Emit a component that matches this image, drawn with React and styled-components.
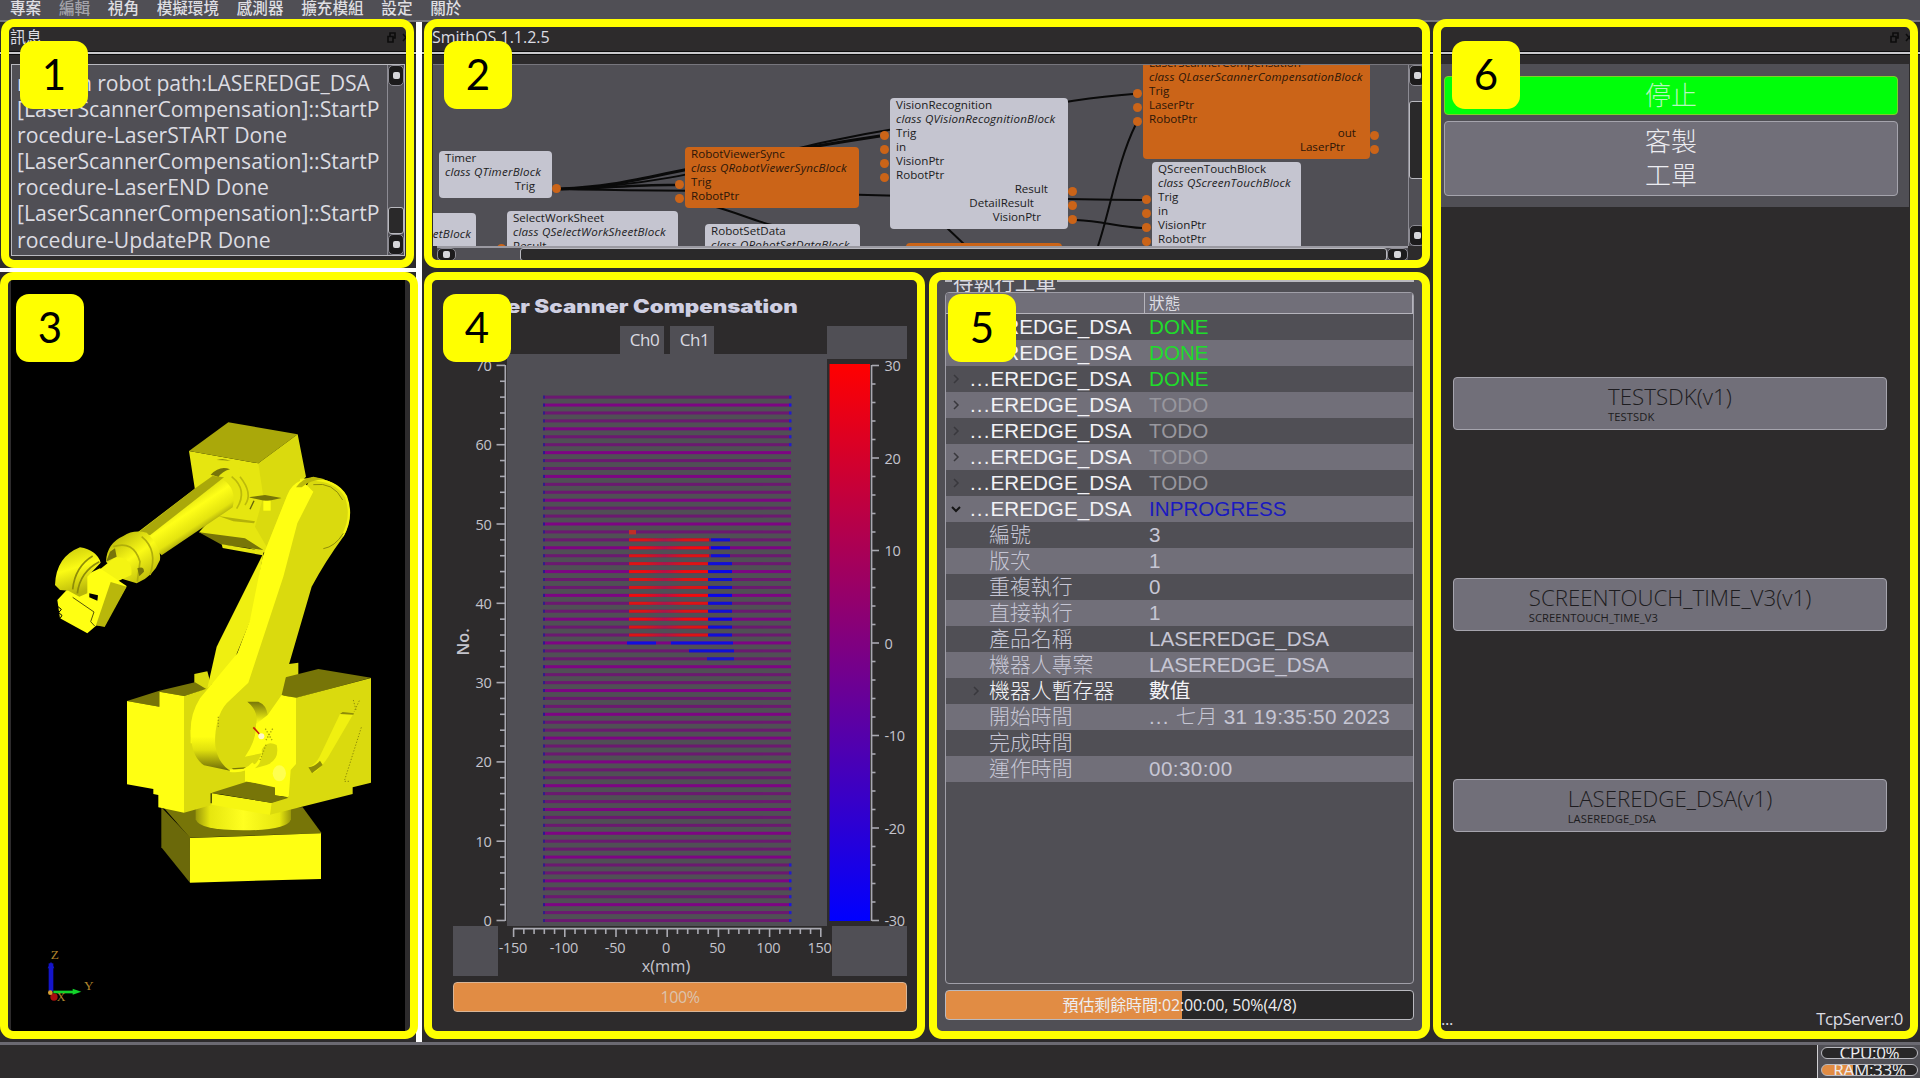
import React from "react";
import styled, { createGlobalStyle, css } from "styled-components";

const UI = `"Open Sans", "Noto Sans CJK TC", sans-serif`;
const ARIAL = `"Liberation Sans", "Noto Sans CJK TC", sans-serif`;

const C = {
  dark: "#2d2b2c",
  mid: "#504f55",
  light: "#716f79",
  line: "#b9b9bf",
  text: "#dcdce2",
  orange: "#cb6418",
  bar: "#e18c44",
  node: "#c5c5d0",
};

const Global = createGlobalStyle`
  * { box-sizing: border-box; }
  html, body { margin: 0; padding: 0; background: ${C.dark}; overflow: hidden; }
`;

const Screen = styled.div`
  width: 1920px;
  height: 1078px;
  display: flex;
  flex-direction: column;
  overflow: hidden;
  background: ${C.dark};
  color: ${C.text};
  font-family: ${UI};
  white-space: nowrap;
`;

/* ---------- menu ---------- */
const MenuBar = styled.nav`
  flex: none;
  height: 22px;
  padding: 0 0 3px 10px;
  display: flex;
  align-items: center;
  gap: 17.7px;
  background: ${C.mid};
  border-bottom: 2px solid #77767d;
`;
const MenuItem = styled.span`
  font-size: 15.6px;
  line-height: 17px;
  font-weight: 500;
  color: ${(p) => (p.$dim ? "#a3a3aa" : "#dedee2")};
`;

/* ---------- docks ---------- */
const Workspace = styled.main`
  flex: none;
  height: 1020px;
  display: flex;
`;
const Column = styled.div`
  flex: none;
  width: ${(p) => p.$w}px;
  display: flex;
  flex-direction: column;
`;
const Row = styled.div`
  display: flex;
  flex: 1;
`;
const Splitter = styled.div`
  flex: none;
  background: #fff;
  ${(p) => (p.$vertical ? css`width: 6px;` : css`height: 4px;`)}
`;
const Dock = styled.section`
  position: relative;
  flex: none;
  display: flex;
  flex-direction: column;
  width: ${(p) => (p.$w ? p.$w + "px" : "auto")};
  height: ${(p) => p.$h}px;
`;
const TitleBar = styled.header`
  flex: none;
  height: 32px;
  margin-bottom: 10px;
  padding: ${(p) => p.$pad || "0 6px 0 10px"};
  display: flex;
  align-items: center;
  justify-content: space-between;
  border-bottom: 2px solid #c9c9cc;
  box-shadow: inset 0 -1px 0 #0c0c0c, 0 1px 0 #0c0c0c;
  font-size: 16px;
  line-height: 20px;
`;
const DockButtons = styled.span`
  display: flex;
  gap: 6px;
  margin-left: auto;
`;
const Highlight = styled.div`
  position: absolute;
  z-index: 3;
  left: ${(p) => p.$x}px;
  top: ${(p) => p.$y}px;
  width: ${(p) => p.$w}px;
  height: ${(p) => p.$h}px;
  border: 8px solid #ff0;
  border-radius: 13px;
`;
const Badge = styled.div`
  position: absolute;
  z-index: 4;
  left: ${(p) => p.$x}px;
  top: ${(p) => p.$y}px;
  width: 68px;
  height: 68px;
  border-radius: 13px;
  background: #ff0;
  color: #000;
  text-align: center;
  font: 42px/67px Lato, sans-serif;
`;

/* ---------- message log ---------- */
const LogBox = styled.div`
  flex: none;
  height: 192px;
  margin: 0 11px 0 11px;
  display: flex;
  background: ${C.mid};
  border: 1px solid ${C.line};
`;
const LogText = styled.div`
  flex: 1;
  padding: 5px 0 0 5px;
  font-size: 21.2px;
  line-height: 26.1px;
  overflow: hidden;
`;
const LogLine = styled.div`
  letter-spacing: ${(p) => p.$ls}px;
`;
const VBar = styled.div`
  flex: none;
  width: 17px;
  display: flex;
  flex-direction: column;
  border-left: 1px solid #8c8b93;
`;
const ScrollButton = styled.i`
  flex: none;
  width: ${(p) => p.$w || 16}px;
  height: ${(p) => p.$h || 21}px;
  display: flex;
  align-items: center;
  justify-content: center;
  background: #1c1b1c;
  border: 1px solid #8c8b93;
  border-radius: 5px;
  &::after {
    content: "";
    width: 7px;
    height: 7px;
    border-radius: 2px;
    background: #d6d6da;
  }
`;
const Track = styled.i`
  flex: ${(p) => p.$grow || 1};
`;
const Thumb = styled.i`
  flex: none;
  ${(p) => (p.$h ? css`height: ${p.$h}px;` : css`flex: 1;`)}
  background: #2a292a;
  border: 1px solid ${C.line};
  border-radius: 3px;
`;

/* ---------- block canvas ---------- */
const GraphArea = styled.div`
  flex: none;
  height: 182px;
  margin: 0 6px 0 11px;
  display: flex;
  background: ${C.mid};
  border-top: 1px solid #77767d;
`;
const Canvas = styled.div`
  position: relative;
  flex: none;
  width: 975px;
  height: 181px;
  overflow: hidden;
`;
const Wires = styled.svg`
  position: absolute;
  inset: 0;
`;
const Node = styled.div`
  position: absolute;
  left: ${(p) => p.$x}px;
  top: ${(p) => p.$y}px;
  width: ${(p) => p.$w}px;
  height: ${(p) => p.$h}px;
  padding: 0 6px;
  border-radius: 4px;
  background: ${(p) => (p.$hot ? C.orange : C.node)};
  color: ${(p) => (p.$hot ? "#2c1608" : "#1c1c22")};
  font-size: 11.6px;
  line-height: 14px;
`;
const NodeName = styled.div`
  font-weight: 500;
`;
const NodeClass = styled.div`
  font-style: italic;
  letter-spacing: 0.2px;
  text-align: ${(p) => (p.$end ? "right" : "left")};
  padding-right: ${(p) => (p.$end ? "6px" : 0)};
`;
const PortIn = styled.div`
  position: relative;
  &::before {
    content: "";
    position: absolute;
    left: -16px;
    top: 5px;
    width: 9px;
    height: 9px;
    border-radius: 50%;
    background: ${C.orange};
  }
`;
const PortOut = styled.div`
  position: relative;
  text-align: right;
  padding-right: ${(p) => p.$pr}px;
  &::after {
    content: "";
    position: absolute;
    right: -15px;
    top: 5px;
    width: 9px;
    height: 9px;
    border-radius: 50%;
    background: ${C.orange};
  }
`;
const HBar = styled.div`
  flex: none;
  height: 15px;
  margin: 0 23px 0 15px;
  display: flex;
  border-top: 2px solid #9a99a1;
  background: ${C.mid};
`;

/* ---------- 3D view ---------- */
const Viewport = styled.div`
  flex: none;
  height: 751px;
  margin: 8px 11px 0;
  background: #000;
`;

/* ---------- scanner ---------- */
const Scanner = styled.div`
  display: flex;
  flex-direction: column;
  padding: 21px 20px 0 31px;
`;
const ScannerTitle = styled.h1`
  margin: 0;
  height: 33px;
  padding-right: 109px;
  text-align: right;
  font: 900 18.4px/26px Inter, sans-serif;
  color: #cfcfe2;
  span {
    display: inline-block;
    transform: scaleX(1.215);
    transform-origin: right;
  }
`;
const Tabs = styled.div`
  display: flex;
  height: 28px;
  padding-left: 167px;
  gap: 6px;
`;
const Tab = styled.div`
  width: 44px;
  background: ${C.mid};
  text-align: center;
  padding-left: 5px;
  font-size: 17px;
  line-height: 28px;
  letter-spacing: -0.5px;
`;
const Corner = styled.div`
  width: 80px;
  margin-left: auto;
  background: ${C.mid};
`;
const Progress = styled.div`
  position: relative;
  flex: none;
  height: ${(p) => p.$h}px;
  margin: ${(p) => p.$m || 0};
  border: 1px solid ${(p) => (p.$full ? "#d9b596" : C.line)};
  border-radius: ${(p) => p.$r || 4}px;
  background: linear-gradient(to right, ${C.bar} ${(p) => p.$value}%, #282728 ${(p) => p.$value}%);
  color: ${(p) => (p.$full ? "#dcc3ad" : "#ededf0")};
  text-align: center;
  font-size: ${(p) => p.$fs}px;
  line-height: ${(p) => p.$h - 2}px;
  letter-spacing: ${(p) => p.$ls || 0}px;
  overflow: hidden;
`;

/* ---------- work orders ---------- */
const Orders = styled.div`
  height: 751px;
  margin: 8px 9px 0 10px;
  padding: 0 8px;
  background: ${C.mid};
  overflow: hidden;
`;
const GroupTitle = styled.div`
  height: 12px;
  display: flex;
  justify-content: space-between;
  overflow: hidden;
  font-size: 20.6px;
  line-height: 12px;
  &::before {
    content: "";
    width: 7px;
    height: 2px;
    background: #b9b9bf;
  }
  &::after {
    content: "";
    width: 357px;
    height: 2px;
    background: #b9b9bf;
  }
`;
const GroupLabel = styled.span`
  transform: translateY(-3px);
`;
const Table = styled.div`
  height: 692px;
  border: 1px solid #a09fa8;
  border-radius: 4px;
  overflow: hidden;
`;
const HeadRow = styled.div`
  display: flex;
  height: 21px;
  background: ${C.light};
  border: solid #b5b4bc;
  border-width: 0 1px 1px 0;
  font-size: 15.7px;
  line-height: 20px;
`;
const HeadCell = styled.div`
  width: ${(p) => (p.$first ? "199px" : "auto")};
  padding-left: 4px;
  border-right: ${(p) => (p.$first ? "1px solid #b5b4bc" : "0")};
`;
const OrderRow = styled.div`
  display: flex;
  align-items: center;
  height: 26px;
  background: ${(p) => (p.$alt ? C.light : C.mid)};
  font-family: ${ARIAL};
  font-size: 20.65px;
  line-height: 26px;
  color: ${(p) => (p.$strong ? "#f2f2f6" : "#c6c6d4")};
`;
const Caret = styled.span`
  flex: none;
  width: ${(p) => (p.$child ? "43px" : "24px")};
  display: flex;
  padding-left: ${(p) => (p.$child ? "25px" : "5px")};
`;
const NameCell = styled.span`
  flex: none;
  width: ${(p) => (p.$child ? "160px" : "179px")};
  font-weight: ${(p) => (p.$thin ? 300 : 400)};
  font-size: ${(p) => (p.$child ? "20.9px" : "inherit")};
`;
const ValueCell = styled.span`
  color: ${(p) => p.$c || "inherit"};
  letter-spacing: ${(p) => p.$ls || 0}px;
`;
const ThinText = styled.span`
  font-weight: 300;
`;
const Dots = styled.span`
  letter-spacing: 1.1px;
`;

/* ---------- task panel ---------- */
const TaskTop = styled.div`
  flex: none;
  height: 143px;
  margin: 0 11px 0 10px;
  padding: 12px 11px 0 3px;
  background: ${C.mid};
`;
const BigButton = styled.button`
  display: block;
  width: 100%;
  height: ${(p) => p.$h}px;
  margin: 0 0 6px;
  padding: 0 0 3px;
  border: 1px solid ${(p) => (p.$go ? "#7fd02a" : "#a5a4ad")};
  border-radius: 4px;
  background: ${(p) => (p.$go ? "#00ff0a" : C.light)};
  color: ${(p) => (p.$go ? "#b4f8bc" : "#ececf1")};
  font: 300 26px/34.5px "Noto Sans CJK TC", sans-serif;
`;
const TaskList = styled.div`
  display: flex;
  flex-direction: column;
  gap: 148px;
  padding: 170px 33px 0 22px;
`;
const TaskButton = styled.button`
  height: 53px;
  padding: 4px 0 0;
  display: flex;
  justify-content: center;
  border: 1px solid #a5a4ad;
  border-radius: 4px;
  background: ${C.light};
  color: #1d1c20;
  font-family: ${UI};
  text-align: left;
`;
const TaskName = styled.div`
  font-size: 22.3px;
  line-height: 29px;
  font-weight: 300;
`;
const TaskCode = styled.div`
  font-size: 11.2px;
  line-height: 11px;
  letter-spacing: 0.08px;
`;
const TaskFoot = styled.div`
  margin-top: auto;
  display: flex;
  justify-content: space-between;
  padding: 0 17px 11px 10px;
  font-size: 16.8px;
  line-height: 24px;
  letter-spacing: -0.45px;
`;

/* ---------- status bar ---------- */
const StatusBar = styled.footer`
  flex: 1;
  display: flex;
  justify-content: flex-end;
  border-top: 3px solid #6b6a72;
`;
const Meters = styled.div`
  width: 103px;
  padding: 2px 2px 0 3px;
  display: flex;
  flex-direction: column;
  gap: 5px;
  background: ${C.mid};
  border-left: 1px solid #d0d0d4;
`;

const Restore = () => (
  <svg width="9" height="11" viewBox="0 0 9 11" fill="none" stroke="#0c0c0c" strokeWidth="1.6">
    <path d="M3 4V1h5v5H6M1 4.5h5V10H1z" />
  </svg>
);
const Close = () => (
  <svg width="8" height="11" viewBox="0 0 8 11" fill="none" stroke="#0c0c0c" strokeWidth="1.6">
    <path d="M1 2l6 7M7 2L1 9" />
  </svg>
);
const Chevron = ({ open }) => (
  <svg width="10" height="10" viewBox="0 0 10 10" fill="none" stroke={open ? "#151515" : "#39383d"} strokeWidth={open ? 2 : 1.5}>
    <path d={open ? "M1 3l4 4 4-4" : "M3 1l4 4-4 4"} />
  </svg>
);

/* Robot drawn on two sheets at three times the screen size. */
function Robot() {
  const dark = "#777508";
  const side = "#dada0e";
  const hi = "#ffff12";
  return (
    <svg width="394" height="751" viewBox="11 280 394 751">
      <defs>
        <linearGradient id="cyl" x1="587" x2="873" y1="0" y2="0" gradientUnits="userSpaceOnUse">
          <stop offset="0" stopColor="#9a980a" />
          <stop offset="0.15" stopColor="#e6e60f" />
          <stop offset="0.5" stopColor="#ffff20" />
          <stop offset="0.88" stopColor="#e6e60f" />
          <stop offset="1" stopColor="#9a980a" />
        </linearGradient>
        <linearGradient id="arm" x1="530" y1="360" x2="600" y2="466" gradientUnits="userSpaceOnUse">
          <stop offset="0" stopColor="#d0d00d" />
          <stop offset="0.4" stopColor="#ffff18" />
          <stop offset="0.75" stopColor="#e4e40f" />
          <stop offset="1" stopColor="#8f8d08" />
        </linearGradient>
        <linearGradient id="ring" x1="350" y1="470" x2="450" y2="610" gradientUnits="userSpaceOnUse">
          <stop offset="0" stopColor="#bcba0a" />
          <stop offset="0.45" stopColor="#fbfb16" />
          <stop offset="1" stopColor="#b4b20a" />
        </linearGradient>
        <linearGradient id="hand" x1="190" y1="510" x2="230" y2="640" gradientUnits="userSpaceOnUse">
          <stop offset="0" stopColor="#cfcf0c" />
          <stop offset="0.45" stopColor="#fbfb14" />
          <stop offset="1" stopColor="#b8b60a" />
        </linearGradient>
        <linearGradient id="curve" x1="0" y1="1070" x2="0" y2="1170" gradientUnits="userSpaceOnUse">
          <stop offset="0" stopColor={hi} />
          <stop offset="0.4" stopColor="#e0e00e" />
          <stop offset="1" stopColor="#6e6c06" />
        </linearGradient>
        <linearGradient id="slot" x1="0" y1="155" x2="0" y2="215" gradientUnits="userSpaceOnUse">
          <stop offset="0" stopColor="#777508" />
          <stop offset="1" stopColor="#f4f412" />
        </linearGradient>
      </defs>
      <g transform="translate(0 650) scale(0.33333)">
        <path fill="#6b690a" d="M484 472L570 562V698L484 592z" />
        <path fill={dark} d="M490 472H908L965 550L570 563z" />
        <path fill={hi} d="M570 564L963 550V687L570 698z" />
        <path fill="url(#cyl)" d="M587 460V508Q597 541 730 541T873 508V460z" />
        <path fill={side} d="M583 72L622 64L640 130L583 112zM850 44L895 38V75L845 90z" />
        <path fill={dark} d="M381 153L478 122L585 97L620 118L552 138L478 125V170z" />
        <path fill={hi} d="M381 153L478 170V125L552 138V488L475 472V435L460 432V417L381 403z" />
        <path fill={side} d="M552 138L620 116L888 143V440L632 430V466L552 488z" />
        <path fill={dark} d="M845 85L955 57L1113 83L888 144L840 135z" />
        <path fill={side} d="M888 143L1113 84V398L1058 412V432L810 494L812 458L866 440L888 340z" />
        <path fill={hi} d="M840 135L888 143V342L872 360L866 442L825 436V406L735 394V360L800 320z" />
        <path fill="#f6f612" d="M635 430L815 458L810 494L780 490L635 464z" />
        <path fill={dark} d="M635 428L740 395L825 408V435L866 443L815 459z" />
        <path fill="#f0f010" d="M1020 192L1060 192L985 320Q955 366 936 370L925 352Q945 346 958 322z" />
        <path fill="#8e8c08" d="M1020 192L1028 186L1062 190L1060 194zM925 352Q945 350 960 332L968 345L936 370z" />
        <path d="M1084 232L1034 390M1060 150L1068 180M1078 152L1062 186M1034 394H1052" stroke="#8e8c08" strokeWidth="3" strokeDasharray="4 5" fill="none" />
      </g>
      <g transform="translate(0 380) scale(0.33333)">
        <path fill="#e6e610" d="M567 213L775 250L880 330L800 520L597 457L630 420L585 330z" />
        <path fill="#aaa80a" d="M685 127L893 163L775 250L567 213z" />
        <path fill={side} d="M775 250L893 163L918 290L862 345L800 500L765 440L790 350z" />
        <path fill={dark} d="M597 457L735 475L790 510L665 494zM745 352L795 345L845 354L800 364z" />
        <path fill="#b4b20a" d="M655 408L765 424L762 430L700 424z" />
        <path fill="#e6e610" d="M665 493L792 513L788 526L668 504z" />
        <path fill={hi} d="M790 362h22v30h-22z" />
        <path d="M762 362L750 388" stroke="#66640a" strokeWidth="4" />
        <path fill="#e6e610" d="M630 285Q680 235 735 275Q785 340 715 388z" />
        <path fill="#77750a" d="M632 284Q660 255 690 268Q665 275 655 292zM650 240q20-6 42 2l-20-1z" />
        <path fill="none" stroke="#bcba0b" strokeWidth="5" d="M695 290Q745 330 710 386M720 290Q760 340 735 375" />
        <path fill="url(#arm)" d="M586 325L640 286Q715 310 698 382L485 526L415 455z" />
        <path fill="#aaa80a" d="M586 325L638 288L672 292L450 466L412 460z" />
        <path fill="url(#ring)" d="M318 545Q320 490 370 468Q400 448 440 458Q485 500 480 540Q460 590 410 610L370 598z" />
        <path fill="none" stroke="#b0ae0a" strokeWidth="5" d="M425 470Q475 510 450 585M340 500Q400 480 420 545L412 605" />
        <path fill="#f4f412" d="M285 580L345 532Q400 530 394 585L340 610z" />
        <path fill="#77750a" d="M318 545L330 515L345 505L350 530zM412 565q20-8 20 10l-14 14z" />
        <path fill={hi} d="M225 600L300 565L380 618L312 738L290 736L262 760L180 715L172 660L205 625z" />
        <path fill="#b9b70b" d="M332 606L380 620L314 741L288 736z" />
        <path fill="#000" d="M268 640L294 646L292 662L268 652z" />
        <path fill="url(#hand)" d="M165 615Q168 530 240 502Q290 510 302 548L262 590V640L238 650L205 632L180 630z" />
        <path fill="none" stroke="#8e8c08" strokeWidth="5" d="M278 528Q225 560 218 628M298 545Q240 575 232 640" />
        <path d="M218 652L282 696L272 725L284 738" fill="none" stroke="#55530a" strokeWidth="3" />
        <path d="M174 680l10 8l-8 10l10 8l-6 10" fill="none" stroke="#000" strokeWidth="3" />

        <path fill="#efef11" d="M790 520L650 800L622 925L690 870L760 700z" />
        <path fill={side} d="M935 292Q1010 298 1040 350Q1062 410 1030 470Q975 545 935 620L865 860L825 1030Q805 1140 735 1166L660 1150L640 1000L745 900L870 400z" />
        <path fill="none" stroke="#f4f412" strokeWidth="7" d="M900 300Q1005 290 1038 350Q1060 410 1028 468" />
        <path fill="none" stroke="#8e8c08" strokeWidth="3" d="M940 314Q1000 305 1028 360M1030 460Q1005 500 970 506" />
        <path fill={hi} d="M862 345L788 530L750 720L712 820L600 955Q572 1000 572 1050V1090L645 1090Q645 1010 680 970L745 908L850 590L892 430L940 335L905 300Q872 315 862 345z" />
        <path fill="#bcba0a" d="M888 322Q905 295 940 290L975 298Q930 300 905 322z" />
        <path fill="url(#curve)" d="M572 1050Q572 1130 612 1156L690 1172Q640 1140 645 1060z" />
        <path d="M690 1172Q735 1178 760 1150" stroke={hi} strokeWidth="8" fill="none" />
      </g>
      <g transform="translate(0 650) scale(0.33333)">
        <path fill="url(#slot)" d="M742 155L775 155Q800 165 803 195L800 225L768 225Q778 185 742 155z" />
        <path fill={hi} d="M768 222L803 195L845 135L880 150V300L860 420L735 392V365Q770 350 785 310L735 320Q770 270 768 222z" />
        <path fill={side} d="M785 300Q800 270 830 285Q840 330 800 345L765 355Q790 335 785 300z" />
        <ellipse cx="838" cy="370" rx="20" ry="24" fill="#ffff50" />
        <path d="M760 232L778 252" stroke="#c81e0a" strokeWidth="5" />
        <circle cx="784" cy="259" r="9" fill="#fff6c8" />
        <path d="M796 236l22 38M818 236l-22 38M655 200v34M780 330l20-50" stroke="#a8a60a" strokeWidth="4" strokeDasharray="4 5" />
        <path fill={dark} d="M695 355L738 352L730 356L700 358z" />
        <path d="M153 1024V940" stroke="#1414c8" strokeWidth="14" />
        <path fill="#1414c8" d="M143 955L153 935L163 955z" />
        <path d="M160 1026H222" stroke="#12d22a" strokeWidth="8" />
        <path fill="#12d22a" d="M218 1016L244 1025L218 1034z" />
        <circle cx="162" cy="1041" r="11" fill="#a80d0d" />
        <circle cx="151" cy="1028" r="7" fill="#d8a030" />
        <g fill="#b0842c" fontFamily="Liberation Serif, serif" fontSize="40">
          <text x="152" y="928">Z</text>
          <text x="252" y="1021">Y</text>
          <text x="170" y="1054" fontSize="36">X</text>
        </g>
      </g>
    </svg>
  );
}

/* Scanner plot: x in millimetres from -150 to 150, one profile per row. */
const rowY = (n) => 920.5 - n * 7.93;
function Plot() {
  const rows = Array.from({ length: 67 }, (_, n) => n);
  return (
    <svg width="454" height="622" viewBox="453 354 454 622" fontFamily="Open Sans, sans-serif" fontSize="14.5" fill="#c4c4cc">
      <defs>
        <linearGradient id="scale" x1="0" y1="0" x2="0" y2="1">
          <stop offset="0" stopColor="#ff0000" />
          <stop offset="0.5" stopColor="#800080" />
          <stop offset="1" stopColor="#0000ff" />
        </linearGradient>
        <linearGradient id="hot" x1="629" x2="708" y1="0" y2="0" gradientUnits="userSpaceOnUse">
          <stop offset="0.2" stopColor="#f00c0c" />
          <stop offset="0.45" stopColor="#b80f48" />
          <stop offset="0.7" stopColor="#f00c0c" />
        </linearGradient>
      </defs>
      <path fill={C.mid} d="M507 354h320v572h-320zM827 354h80v5h-80zM453 926h45v50h-45zM832 926h75v50h-75z" />
      {rows.map((n) => {
        const y = rowY(n);
        const crisp = n % 3 === 2;
        const h = 3;
        return (
          <g key={n} opacity={crisp ? 1 : 0.88}>
            <rect x="543" y={y - 1.5} width="248" height={h} fill={crisp ? "#7d0583" : "#6f1274"} />
            <rect x="543" y={y - 1.5} width="2" height={h} fill="#2a1a90" />
            {(n < 8 || n > 59) && <rect x="789" y={y - 1.5} width="2.5" height={h} fill="#1818e0" />}
            {n >= 36 && n <= 48 && <rect x="629" y={y - 1.5} width="80" height={h} fill="url(#hot)" />}
            {n >= 36 && n <= 48 && <rect x={n > 45 ? 711 : 708} y={y - 1.5} width={n > 45 ? 19 : 24} height={h} fill="#0808e8" />}
            {n === 49 && <rect x="629" y={y - 2} width="7" height="4.5" fill="#cf2a20" />}
            {n === 35 && <path fill="#1010dd" d={`M627 ${y - 1.5}h29v3h-29zM671 ${y - 1.5}h62v3h-62z`} />}
            {n === 34 && <rect x="689" y={y - 1.5} width="45" height={h} fill="#0808e8" />}
            {n === 33 && <rect x="707" y={y - 1.5} width="27" height={h} fill="#1010dd" />}
          </g>
        );
      })}
      <rect x="829.5" y="364" width="40.5" height="557" fill="url(#scale)" />
      <g stroke="#a9a9b1" strokeWidth="1.6" fill="none">
        <path d="M505.3 365V921M871.6 365V921M513 928.6H821.5" />
        {Array.from({ length: 36 }, (_, i) => {
          const y = rowY(i * 2);
          return <path key={i} d={`M505 ${y}H${i % 5 ? 500 : 496.5}`} />;
        })}
        {Array.from({ length: 31 }, (_, i) => {
          const y = 365.5 + i * 18.5;
          return <path key={i} d={`M872 ${y}H${i % 5 ? 875.5 : 879}`} />;
        })}
        {Array.from({ length: 31 }, (_, i) => {
          const x = 513.6 + i * 10.24;
          return <path key={i} d={`M${x} 929V${i % 5 ? 934 : 937}`} />;
        })}
      </g>
      {[0, 10, 20, 30, 40, 50, 60, 70].map((v) => (
        <text key={v} x="491.5" y={rowY(v) + 5.5} textAnchor="end" letterSpacing="-0.3">{v}</text>
      ))}
      {[30, 20, 10, 0, -10, -20, -30].map((v, i) => (
        <text key={v} x="884.5" y={371 + i * 92.5} letterSpacing="-0.3">{v}</text>
      ))}
      {[-150, -100, -50, 0, 50, 100, 150].map((v, i) => (
        <text key={v} x={512.8 + i * 51.1} y="953" textAnchor="middle" letterSpacing="-0.3">{v}</text>
      ))}
      <text x="666" y="971.5" textAnchor="middle" fontSize="16.4">x(mm)</text>
      <text transform="translate(469 655.5) rotate(-90)" fontSize="16.3" fontWeight="600">No.</text>
    </svg>
  );
}

const log = [
  ["runs on robot path:LASEREDGE_DSA", -0.15],
  ["[LaserScannerCompensation]::StartP", 0],
  ["rocedure-LaserSTART Done", 0],
  ["[LaserScannerCompensation]::StartP", 0],
  ["rocedure-LaserEND Done", 0],
  ["[LaserScannerCompensation]::StartP", 0],
  ["rocedure-UpdatePR Done", 0],
];

const GREEN = "#1fdc2b";
const GREY = "#98979e";
const orders = [
  ...["DONE", "DONE", "DONE", "TODO", "TODO", "TODO", "TODO", "INPROGRESS"].map((s) => ({
    job: true,
    value: s,
    color: s === "DONE" ? GREEN : s === "TODO" ? GREY : "#1a1abf",
  })),
  { name: "編號", value: "3" },
  { name: "版次", value: "1" },
  { name: "重複執行", value: "0" },
  { name: "直接執行", value: "1" },
  { name: "產品名稱", value: "LASEREDGE_DSA" },
  { name: "機器人專案", value: "LASEREDGE_DSA" },
  { name: "機器人暫存器", value: "數值", caret: true },
  { name: "開始時間", value: <><Dots>...</Dots> <ThinText>七月</ThinText> 31 19:35:50 2023</>, ls: 0.36 },
  { name: "完成時間", value: "" },
  { name: "運作時間", value: "00:30:00", ls: 0.4 },
];

const tasks = [
  ["TESTSDK(v1)", "TESTSDK"],
  ["SCREENTOUCH_TIME_V3(v1)", "SCREENTOUCH_TIME_V3"],
  ["LASEREDGE_DSA(v1)", "LASEREDGE_DSA"],
];

function Graph() {
  return (
    <Canvas>
      <Wires width="975" height="181" viewBox="433 65 975 181" fill="none" stroke="#0a0a0a" strokeWidth="2">
        <path d="M560 189C620 186 640 178 700 167S800 148 880 136" strokeWidth="3" />
        <path d="M560 189C700 184 760 150 900 128S1080 98 1133 94" />
        <path d="M560 189C600 189 640 184 676 185" strokeWidth="2.5" />
        <path d="M560 189C640 191 700 190 800 193S1000 199 1142 200" />
        <path d="M716 207C735 212 755 221 772 225M946 227L966 246" />
        <path d="M1136 124C1118 160 1110 210 1098 246M1076 220C1102 221 1119 227 1142 228" />
      </Wires>
      <Node $x={6} $y={86} $w={113} $h={47}>
        <NodeName>Timer</NodeName>
        <NodeClass>class QTimerBlock</NodeClass>
        <PortOut $pr={11}>Trig</PortOut>
      </Node>
      <Node $x={252} $y={82} $w={174} $h={61} $hot>
        <NodeName>RobotViewerSync</NodeName>
        <NodeClass>class QRobotViewerSyncBlock</NodeClass>
        <PortIn>Trig</PortIn>
        <PortIn>RobotPtr</PortIn>
      </Node>
      <Node $x={457} $y={33} $w={178} $h={131}>
        <NodeName>VisionRecognition</NodeName>
        <NodeClass>class QVisionRecognitionBlock</NodeClass>
        <PortIn>Trig</PortIn>
        <PortIn>in</PortIn>
        <PortIn>VisionPtr</PortIn>
        <PortIn>RobotPtr</PortIn>
        <PortOut $pr={14}>Result</PortOut>
        <PortOut $pr={28}>DetailResult</PortOut>
        <PortOut $pr={21}>VisionPtr</PortOut>
      </Node>
      <Node $x={710} $y={-9} $w={227} $h={103} $hot>
        <NodeName>LaserScannerCompensation</NodeName>
        <NodeClass>class QLaserScannerCompensationBlock</NodeClass>
        <PortIn>Trig</PortIn>
        <PortIn>LaserPtr</PortIn>
        <PortIn>RobotPtr</PortIn>
        <PortOut $pr={8}>out</PortOut>
        <PortOut $pr={19}>LaserPtr</PortOut>
      </Node>
      <Node $x={719} $y={97} $w={149} $h={100}>
        <NodeName>QScreenTouchBlock</NodeName>
        <NodeClass>class QScreenTouchBlock</NodeClass>
        <PortIn>Trig</PortIn>
        <PortIn>in</PortIn>
        <PortIn>VisionPtr</PortIn>
        <PortIn>RobotPtr</PortIn>
      </Node>
      <Node $x={-90} $y={148} $w={133} $h={60}>
        <NodeName>&nbsp;</NodeName>
        <NodeClass $end>class QWorkSheetBlock</NodeClass>
      </Node>
      <Node $x={74} $y={146} $w={171} $h={60}>
        <NodeName>SelectWorkSheet</NodeName>
        <NodeClass>class QSelectWorkSheetBlock</NodeClass>
        <PortIn>Result</PortIn>
      </Node>
      <Node $x={272} $y={159} $w={155} $h={60}>
        <NodeName>RobotSetData</NodeName>
        <NodeClass>class QRobotSetDataBlock</NodeClass>
      </Node>
      <Node $x={473} $y={178} $w={156} $h={40} $hot />
    </Canvas>
  );
}

export default function App() {
  const menu = ["專案", "編輯", "視角", "模擬環境", "感測器", "擴充模組", "設定", "關於"];
  return (
    <Screen>
      <Global />
      <MenuBar>
        {menu.map((m) => (
          <MenuItem key={m} $dim={m === "編輯"}>{m}</MenuItem>
        ))}
      </MenuBar>

      <Workspace>
        <Column $w={416}>
          <Dock $h={246}>
            <TitleBar>
              <span>訊息</span>
              <DockButtons><Restore /><Close /></DockButtons>
            </TitleBar>
            <LogBox>
              <LogText>
                {log.map(([t, ls], i) => (
                  <LogLine key={i} $ls={ls}>{t}</LogLine>
                ))}
              </LogText>
              <VBar>
                <ScrollButton />
                <Track />
                <Thumb $h={27} />
                <ScrollButton />
              </VBar>
            </LogBox>
            <Highlight $x={1} $y={-3} $w={413} $h={249} />
            <Badge $x={20} $y={19}>1</Badge>
          </Dock>
          <Splitter />
          <Dock $h={770}>
            <Viewport><Robot /></Viewport>
            <Highlight $x={0} $y={0} $w={418} $h={767} />
            <Badge $x={16} $y={22}>3</Badge>
          </Dock>
        </Column>
        <Splitter $vertical />

        <Column $w={1009}>
          <Dock $h={250}>
            <TitleBar $pad="0 10px"><span>SmithOS 1.1.2.5</span></TitleBar>
            <GraphArea>
              <Graph />
              <VBar>
                <ScrollButton />
                <Track $grow={15} />
                <Thumb $h={78} />
                <Track $grow={46} />
                <ScrollButton />
              </VBar>
            </GraphArea>
            <HBar>
              <ScrollButton $w={19} $h={13} />
              <Track $grow="0 0 64px" />
              <Thumb />
              <ScrollButton $w={21} $h={13} />
            </HBar>
            <Highlight $x={2} $y={-3} $w={1006} $h={249} />
            <Badge $x={22} $y={19}>2</Badge>
          </Dock>
          <Row>
            <Dock $w={505} $h={770}>
              <Scanner>
                <ScannerTitle><span>Laser Scanner Compensation</span></ScannerTitle>
                <Tabs>
                  <Tab>Ch0</Tab>
                  <Tab>Ch1</Tab>
                  <Corner />
                </Tabs>
                <Plot />
                <Progress $h={30} $m="6px 0 0" $value={100} $fs={16} $ls={-0.4} $full>100%</Progress>
              </Scanner>
              <Highlight $x={2} $y={0} $w={501} $h={767} />
              <Badge $x={21} $y={22}>4</Badge>
            </Dock>
            <Dock $w={504} $h={770}>
              <Orders>
                <GroupTitle><GroupLabel>待執行工單</GroupLabel></GroupTitle>
                <Table>
                  <HeadRow>
                    <HeadCell $first />
                    <HeadCell>狀態</HeadCell>
                  </HeadRow>
                  {orders.map((o, i) => (
                    <OrderRow key={i} $alt={i % 2 === 1} $strong={o.job || o.caret}>
                      <Caret $child={!o.job}>
                        {(o.job || o.caret) && <Chevron open={i === 7} />}
                      </Caret>
                      <NameCell $child={!o.job} $thin={!o.job}>
                        {o.job ? <><Dots>...</Dots>EREDGE_DSA</> : o.name}
                      </NameCell>
                      <ValueCell $c={o.color} $ls={o.ls}>{o.value}</ValueCell>
                    </OrderRow>
                  ))}
                </Table>
                <Progress $h={30} $m="6px 0 0" $value={50.5} $fs={16} $ls={-0.12}>
                  預估剩餘時間:02:00:00, 50%(4/8)
                </Progress>
              </Orders>
              <Highlight $x={2} $y={0} $w={501} $h={767} />
              <Badge $x={21} $y={22}>5</Badge>
            </Dock>
          </Row>
        </Column>

        <Column $w={489}>
          <Dock $h={1020}>
            <TitleBar $pad="0 7px 0 0">
              <DockButtons><Restore /><Close /></DockButtons>
            </TitleBar>
            <TaskTop>
              <BigButton $h={39} $go>停止</BigButton>
              <BigButton $h={75}>客製<br />工單</BigButton>
            </TaskTop>
            <TaskList>
              {tasks.map(([name, code]) => (
                <TaskButton key={code}>
                  <div>
                    <TaskName>{name}</TaskName>
                    <TaskCode>{code}</TaskCode>
                  </div>
                </TaskButton>
              ))}
            </TaskList>
            <TaskFoot>
              <span>...</span>
              <span>TcpServer:0</span>
            </TaskFoot>
            <Highlight $x={2} $y={-3} $w={485} $h={1020} />
            <Badge $x={21} $y={19}>6</Badge>
          </Dock>
        </Column>
      </Workspace>

      <StatusBar>
        <Meters>
          <Progress $h={12} $r={6} $value={0} $fs={17} $ls={-0.3}>CPU:0%</Progress>
          <Progress $h={12} $r={6} $value={33} $fs={17} $ls={-0.3}>RAM:33%</Progress>
        </Meters>
      </StatusBar>
    </Screen>
  );
}
